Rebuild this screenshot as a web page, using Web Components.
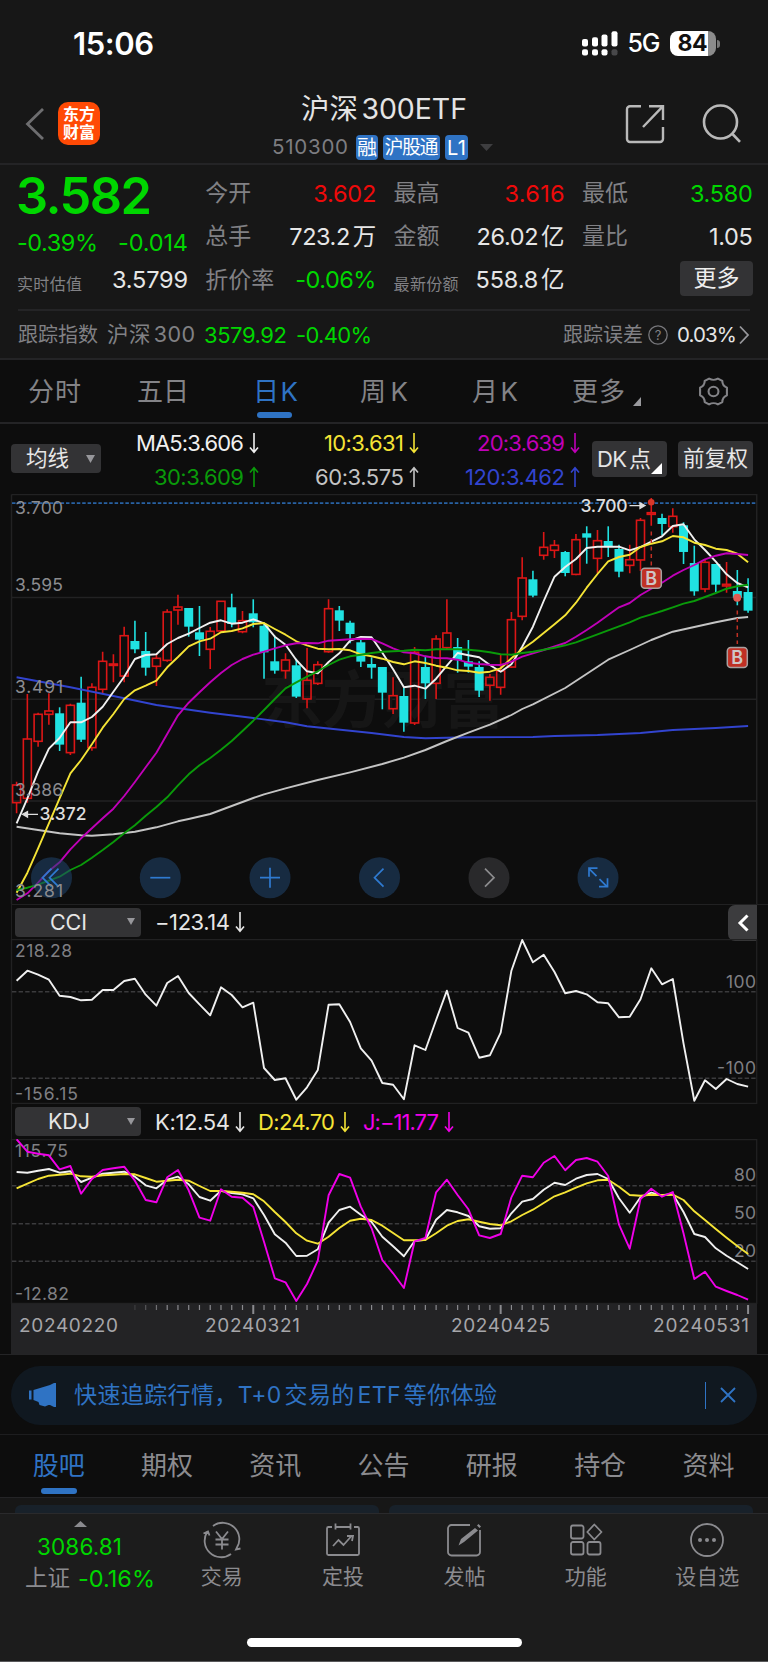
<!DOCTYPE html>
<html lang="zh-CN">
<head>
<meta charset="utf-8">
<title>沪深300ETF 510300</title>
<style>
  html, body { margin: 0; background: #0d0d0d; }
  body {
    width: 768px;
    height: 1662px;
    overflow: hidden;
    color: #e6e6e6;
    font-family: Inter, "Noto Sans CJK SC", sans-serif;
    --up: #ee0a0a;
    --down: #00d600;
    --blue: #2f73c4;
    --dim: #818185;
    --line: #242426;
  }
</style>
</head>
<body>
<stock-page></stock-page>

<script>
'use strict';

// Small base class: every component fills its shadow root from its own render()
class BaseElement extends HTMLElement {
  constructor() {
    super();
    this.attachShadow({ mode: 'open' });
  }
  connectedCallback() {
    this.shadowRoot.innerHTML = this.render();
  }
}

// Text set to an exact width by spreading its letters: <fit-text w="80" size="24">
class FitText extends HTMLElement {
  constructor() {
    super();
    this.attachShadow({ mode: 'open' }).innerHTML = `<style>
      :host { display: block; flex: none; white-space: nowrap; line-height: 1; text-autospace: normal; }
      span { display: inline-block; }
    </style><span><slot></slot></span>`;
  }
  connectedCallback() {
    const span = this.shadowRoot.querySelector('span');
    const w = Number(this.getAttribute('w'));
    if (this.hasAttribute('size')) this.style.fontSize = this.getAttribute('size') + 'px';
    if (this.hasAttribute('color')) this.style.color = this.getAttribute('color');
    if (!w) return;
    const count = this.textContent.length;
    const natural = span.getBoundingClientRect().width;
    this.style.width = w + 'px';
    if (count > 1) span.style.letterSpacing = (w - natural) / (count - 1) + 'px';
  }
}
customElements.define('fit-text', FitText);

class TrendArrow extends BaseElement {
  render() {
    const up = this.getAttribute('dir') === 'up';
    return `<style>
      :host { display: block; flex: none; width: 10px; height: 22px; }
      svg { display: block; ${up ? 'transform: scaleY(-1);' : ''} }
    </style>
    <svg width="10" height="22" fill="none" stroke="currentColor" stroke-width="1.6"><path d="M5 1v19M1 15.500l4 4.800 4-4.800"/></svg>`;
  }
}
customElements.define('trend-arrow', TrendArrow);

class StatusBar extends BaseElement {
  render() {
    return `<style>
      :host { display: flex; align-items: flex-start; height: 90px; padding: 0 48.500px 0 73px; box-sizing: border-box; color: #fff; }
      .time { margin-top: 28px; font-weight: 600; }
      .right { display: flex; margin: 31px 0 0 auto; align-items: center; height: 25px; }
      .net { margin-left: 9px; font-weight: 500; }
      .battery { display: flex; align-items: center; justify-content: center; width: 46px; height: 25px; margin-left: 9px; border-radius: 8px;
        background: linear-gradient(90deg, #fff 38px, #8b8b8b 38px); color: #111; font-weight: 700; }
      .nub { width: 3px; height: 8px; margin-left: 1px; border-radius: 0 3px 3px 0; background: #777; }
    </style>
    <fit-text class="time" w="81" size="31">15:06</fit-text>
    <div class="right">
      <svg width="37" height="25" fill="#fff">
        <rect x="0" y="8" width="6" height="7.5" rx="2"/><rect x="10" y="6.2" width="6" height="9.3" rx="2"/>
        <rect x="19.5" y="3.5" width="6" height="12" rx="2"/><rect x="29.5" y=".3" width="6" height="15.2" rx="2"/>
        <rect x="0" y="18.2" width="6" height="6.4" rx="2"/><rect x="10" y="18.2" width="6" height="6.4" rx="2"/>
        <rect x="19.5" y="18.2" width="6" height="6.4" rx="2"/><rect x="29.5" y="18.2" width="6" height="6.4" rx="2" fill="#48484a"/>
      </svg>
      <fit-text class="net" w="33" size="25">5G</fit-text>
      <div class="battery"><fit-text w="30" size="23">84</fit-text></div>
      <div class="nub"></div>
    </div>`;
  }
}
customElements.define('status-bar', StatusBar);

class NavBar extends BaseElement {
  render() {
    return `<style>
      :host { display: grid; grid-template-columns: 200px 1fr 200px; height: 75px; box-sizing: border-box; border-bottom: 2px solid var(--line); }
      .left, .right { display: flex; align-items: flex-start; }
      .back { margin: 18px 0 0 25px; }
      .logo { display: flex; flex-direction: column; align-items: center; justify-content: center; width: 42px; height: 43px; margin: 12px 0 0 13px;
        border-radius: 10px; background: #ff4a05; color: #fff; font-weight: 700; line-height: 17.500px; font-size: 16px; }
      .mid { display: flex; flex-direction: column; align-items: center; }
      .title { margin-top: 5px; color: #e4e4e4; }
      .sub { display: flex; align-items: center; align-self: flex-start; margin: 11px 0 0 72px; height: 26px; color: #7d7d81; }
      .tag { display: flex; align-items: center; justify-content: center; height: 25px; margin-left: 5px; border-radius: 4px; background: var(--blue); color: #fff; }
      .share { margin: 14px 0 0 57px; }
      .search { margin: 14px 0 0 37px; }
    </style>
    <div class="left">
      <svg class="back" width="20" height="32" fill="none" stroke="#6e6e70" stroke-width="2.8"><path d="M18 1L2.500 16 18 31"/></svg>
      <div class="logo"><div>东方</div><div>财富</div></div>
    </div>
    <div class="mid">
      <fit-text class="title" w="166" size="28.500">沪深300ETF</fit-text>
      <div class="sub">
        <fit-text w="76" size="20.500">510300</fit-text>
        <div class="tag" style="width:22px;margin-left:8px"><fit-text w="20" size="20">融</fit-text></div>
        <div class="tag" style="width:57px"><fit-text w="54" size="19">沪股通</fit-text></div>
        <div class="tag" style="width:23px"><fit-text w="19" size="20">L1</fit-text></div>
        <svg width="13" height="7" style="margin-left:12px"><path d="M0 0h13l-6.500 7z" fill="#3e3e40"/></svg>
      </div>
    </div>
    <div class="right">
      <svg class="share" width="40" height="40" fill="none" stroke="#b9b9b9" stroke-width="2.4"><path d="M16 2.200H5a3 3 0 0 0-3 3V35a3 3 0 0 0 3 3h30a3 3 0 0 0 3-3V23M24 2.200h14V16M38 2.200L18 23"/></svg>
      <svg class="search" width="40" height="40" fill="none" stroke="#b9b9b9" stroke-width="2.6"><circle cx="18.500" cy="18" r="16.500"/><path d="M30 29.500l8 8.300"/></svg>
    </div>`;
  }
}
customElements.define('nav-bar', NavBar);

class QuotePanel extends BaseElement {
  cell(label, labelW, value, valueW, color) {
    const small = label.length === 4;
    return `<div class="cell">
      <fit-text class="${small ? 'small' : 'label'}" w="${labelW}" size="${small ? 16 : 23}">${label}</fit-text>
      <fit-text w="${valueW}" size="23.500" color="${color}">${value}</fit-text>
    </div>`;
  }
  render() {
    const red = 'var(--up)', green = 'var(--down)', plain = '#e6e6e6';
    return `<style>
      :host { display: block; height: 195px; box-sizing: border-box; border-bottom: 2px solid var(--line); }
      .grid { display: grid; grid-template-columns: repeat(4, 171px); column-gap: 17.300px; height: 144px; padding: 7px 15px 0 17px; box-sizing: border-box; }
      .col { display: flex; flex-direction: column; }
      .cell { display: flex; align-items: center; justify-content: space-between; height: 43.300px; }
      .price { display: flex; align-items: center; height: 48px; margin-left: -1px; color: var(--down); font-weight: 600; }
      .label, .small { color: var(--dim); }
      .small { padding-top: 8px; }
      .more { display: flex; align-items: center; justify-content: center; align-self: flex-end; width: 73px; height: 35px; margin-top: 2px; border-radius: 4px; background: #333335; color: #eee; }
      .track { display: flex; align-items: center; height: 48px; margin: 0 18px; border-top: 2px solid var(--line); color: var(--dim); }
      .gap { flex: 1; }
    </style>
    <div class="grid">
      <div class="col">
        <div class="price"><fit-text w="136" size="50.500">3.582</fit-text></div>
        <div class="cell" style="height:45px"><fit-text w="81" size="23.500" color="${green}">-0.39%</fit-text><fit-text w="70" size="23.500" color="${green}">-0.014</fit-text></div>
        <div class="cell" style="height:29px">
          <fit-text class="small" w="65" size="16">实时估值</fit-text><fit-text w="76" size="23.500">3.5799</fit-text>
        </div>
      </div>
      <div class="col">
        ${this.cell('今开', 46, '3.602', 63, red)}
        ${this.cell('总手', 46, '723.2万', 87, plain)}
        ${this.cell('折价率', 69, '-0.06%', 81, green)}
      </div>
      <div class="col">
        ${this.cell('最高', 46, '3.616', 60, red)}
        ${this.cell('金额', 46, '26.02亿', 88, plain)}
        ${this.cell('最新份额', 65, '558.8亿', 89, plain)}
      </div>
      <div class="col">
        ${this.cell('最低', 46, '3.580', 63, green)}
        ${this.cell('量比', 46, '1.05', 44, plain)}
        <div class="more"><fit-text w="46" size="23">更多</fit-text></div>
      </div>
    </div>
    <div class="track">
      <fit-text w="80" size="20">跟踪指数</fit-text>
      <fit-text w="88" size="21.500" style="margin-left:9px">沪深300</fit-text>
      <fit-text w="83" size="22" color="${green}" style="margin-left:9px">3579.92</fit-text>
      <fit-text w="76" size="22" color="${green}" style="margin-left:9px">-0.40%</fit-text>
      <span class="gap"></span>
      <fit-text w="80" size="20">跟踪误差</fit-text>
      <svg width="20" height="20" style="margin-left:5px" fill="none" stroke="#77777b" stroke-width="1.3"><circle cx="10" cy="10" r="9.200"/><text x="10" y="14.600" text-anchor="middle" font-size="13" fill="#818185" stroke="none">?</text></svg>
      <fit-text w="60" size="20.500" color="#e6e6e6" style="margin-left:9px">0.03%</fit-text>
      <svg width="12" height="20" style="margin-left:1px" fill="none" stroke="#97979b" stroke-width="1.800"><path d="M2 1.500l8 8.500-8 8.500"/></svg>
    </div>`;
  }
}
customElements.define('quote-panel', QuotePanel);

class PeriodTabs extends BaseElement {
  render() {
    // label, left edge, width
    const tabs = [['分时', 28, 53], ['五日', 137, 52], ['日K', 253, 45], ['周K', 360, 48], ['月K', 472, 46], ['更多', 572, 53]];
    let x = 0;
    const items = tabs.map(([label, left, w]) => {
      const gap = left - x;
      x = left + w;
      return `<fit-text class="${label === '日K' ? 'on' : ''}" style="margin-left:${gap}px" w="${w}" size="26">${label}</fit-text>`;
    }).join('');
    return `<style>
      :host { display: block; height: 64px; box-sizing: border-box; border-bottom: 2px solid var(--line); color: #838387; }
      .row { display: flex; align-items: center; height: 63px; }
      .on { color: var(--blue); }
      .bar { width: 35px; height: 6px; margin: -11px 0 0 257px; border-radius: 3px; background: var(--blue); }
      .corner { margin: 19px 0 0 8px; }
      .gear { margin-left: 56px; }
    </style>
    <div class="row">${items}
      <svg class="corner" width="8" height="9"><path d="M8 0v9H0z" fill="#9a9a9e"/></svg>
      <svg class="gear" width="33" height="31" viewBox="0 0 30 30" preserveAspectRatio="none" fill="none" stroke="#838387" stroke-width="1.900">
        <path d="M11 2.500q4 2.500 8 0l4 2.300q0 4.500 4.200 6.500v7.400q-4.200 2-4.200 6.500l-4 2.300q-4-2.500-8 0l-4-2.300q0-4.500-4.200-6.500v-7.400q4.200-2 4.200-6.500z" stroke-linejoin="round"/>
        <circle cx="15" cy="15" r="4.500"/>
      </svg>
    </div>
    <div class="bar"></div>`;
  }
}
customElements.define('period-tabs', PeriodTabs);

class MaLegend extends BaseElement {
  item(text, w, color, dir) {
    return `<div class="item" style="color:${color}"><fit-text w="${w}" size="22">${text}</fit-text><trend-arrow dir="${dir}"></trend-arrow></div>`;
  }
  render() {
    return `<style>
      :host { display: flex; align-items: center; height: 70px; }
      .btn { display: flex; align-items: center; box-sizing: border-box; border-radius: 4px; background: #333335; color: #e6e6e6; }
      .ma { width: 90px; height: 29px; margin: 0 0 0 11px; padding-left: 15px; }
      .values { display: grid; grid-template-columns: 158px 160px 161px; grid-auto-rows: 34px; margin-top: 2px; }
      .item { display: flex; align-items: center; justify-content: flex-end; gap: 5px; }
      .act { width: 75px; height: 36px; }
    </style>
    <div class="btn ma"><fit-text w="43" size="21.500">均线</fit-text>
      <svg width="9" height="8" style="margin-left:17px"><path d="M0 0h9L4.500 8z" fill="#97979b"/></svg></div>
    <div class="values">
      ${this.item('MA5:3.606', 108, '#f0f0f0', 'down')}
      ${this.item('10:3.631', 80, '#f5e436', 'down')}
      ${this.item('20:3.639', 88, '#c000b8', 'down')}
      ${this.item('30:3.609', 90, '#0a9a0a', 'up')}
      ${this.item('60:3.575', 89, '#c4c4c4', 'up')}
      ${this.item('120:3.462', 100, '#3244cf', 'up')}
    </div>
    <div class="btn act" style="margin-left:12px;padding-left:5px"><fit-text w="54" size="22">DK点</fit-text>
      <svg width="11" height="11" style="margin:19px 0 0 0"><path d="M11 0v11H0z" fill="#fff"/></svg></div>
    <div class="btn act" style="margin-left:11px;justify-content:center"><fit-text w="65" size="21.500">前复权</fit-text></div>`;
  }
}
customElements.define('ma-legend', MaLegend);

// ---- chart helpers -------------------------------------------------
const STEP = 10.757;   // distance between two trading days
const FIRST = 16.6;    // x of the first day
const dayX = i => FIRST + STEP * i;

// values are thirds of a pixel, measured down from "top"
const linePath = (values, top = 0) => values
  .map((v, i) => Array.isArray(v) ? [dayX(v[0]), v[1]] : [dayX(i), v])
  .map(([x, y], i) => (i ? 'L' : 'M') + x.toFixed(1) + ' ' + (y / 3 + top).toFixed(1))
  .join('');

// u = up (hollow red), d = down (filled cyan); high, body top, body bottom, low
const CANDLES = `u875,885,938,970 u612,747,925,938 u668,673,754,770 u610,663,673,704 d652,670,764,783 u641,646,788,795
d560,638,749,756 u580,592,773,782 u485,514,598,609 u493,522,526,577 u410,437,558,577 d392,453,478,490 d426,483,533,557
u492,505,529,588 u358,366,511,515 u314,351,360,404 d354,354,410,440 d348,427,449,498 u411,424,478,537 u333,334,423,428
d311,352,402,412 u363,392,425,430 d328,370,397,412 d400,407,487,566 d437,514,542,551 u490,510,542,566 d506,526,620,624
u474,571,627,655 u514,524,580,585 u328,356,485,488 d348,361,392,423 d392,398,432,460 d440,457,515,531 d502,522,533,566
d531,531,608,658 u562,617,656,672 d592,618,698,725 u471,487,699,705 d497,531,580,627 u436,447,580,627 u328,429,473,478
d444,471,510,548 d450,514,530,548 d514,531,602,621 u552,562,586,632 u495,543,592,614 u366,389,531,533 u202,264,379,391
d242,268,317,322 u126,172,196,209 u150,166,181,204 d183,186,249,259 u132,149,253,256 d109,130,143,221 u120,152,205,250
d109,153,168,201 d164,177,245,262 u164,209,226,250 u84,91,210,243 u24,68,73,107 d71,84,102,136 u55,79,110,128
d97,106,186,222 d167,219,304,317 u210,217,297,307 d222,222,284,306 u216,283,288,308 d240,303,323,346 d265,306,362,368`
  .split(/\s+/).map(s => [s[0], ...s.slice(1).split(',').map(Number)]);

const MA = {
  '#3244cf': [[0, 562], [5, 592], [10, 625], [13, 645], [18, 668], [22, 684], [25, 697], [27, 709], [33, 729], [36, 741], [38, 745], [42, 742], [48, 741], [50, 738], [54, 735], [58, 729], [61, 720], [65, 714], [68, 708]],
  '#c4c4c4': [[0, 1010], [2, 1020], [4, 1030], [6, 1036], [7, 1037], [9, 1033], [11, 1025], [13, 1012], [15, 994], [16, 987], [18, 972], [20, 948], [22, 924], [23, 913], [25, 895], [28, 870], [31, 847], [34, 822], [36, 803], [38, 780], [40, 753], [42, 728], [44, 704], [46, 675], [47, 657], [48, 643], [51, 594], [55, 509], [57, 480], [59, 450], [61, 425], [63, 411], [65, 397], [67, 384], [68, 381]],
  '#f0f0f0': [1000, 925, 845, 776, 744, 697, 697, 681, 650, 605, 560, 507, 495, 493, 462, 444, 431, 414, 398, 391, 401, 398, 388, 400, 440, 464, 510, 544, 550, 516, 490, 452, 441, 442, 488, 538, 592, 587, 596, 566, 527, 489, 496, 502, 525, 545, 523, 470, 410, 333, 260, 231, 207, 174, 170, 170, 170, 181, 171, 155, 139, 108, 103, 148, 180, 215, 253, 279, 292],
  '#f5e436': [1208, 1148, 1075, 1000, 925, 850, 810, 763, 713, 672, 627, 601, 587, 572, 532, 501, 469, 454, 446, 427, 423, 415, 402, 399, 417, 434, 454, 466, 476, 478, 477, 481, 493, 499, 506, 516, 523, 514, 519, 527, 533, 541, 543, 548, 545, 535, 505, 478, 455, 429, 403, 376, 338, 293, 252, 214, 201, 194, 171, 161, 154, 138, 142, 158, 165, 176, 180, 191, 217],
  '#c000b8': [1230, 1210, 1178, 1143, 1117, 1078, 1045, 1015, 985, 956, 918, 876, 832, 788, 732, 676, 638, 607, 577, 549, 525, 507, 494, 485, 475, 466, 460, 459, 460, 452, 450, 448, 446, 447, 460, 475, 487, 490, 499, 504, 505, 509, 518, 522, 524, 525, 515, 500, 490, 480, 469, 459, 440, 420, 398, 375, 352, 339, 315, 296, 278, 257, 240, 225, 208, 197, 190, 192, 195],
  '#0a9a0a': [1200, 1193, 1184, 1172, 1160, 1140, 1125, 1103, 1080, 1056, 1030, 1006, 977, 951, 922, 886, 853, 826, 804, 779, 753, 723, 692, 660, 627, 595, 577, 560, 544, 525, 509, 499, 494, 489, 485, 484, 482, 479, 481, 478, 478, 478, 479, 482, 487, 493, 494, 489, 485, 479, 473, 466, 457, 445, 433, 421, 409, 397, 383, 373, 363, 352, 341, 333, 321, 309, 296, 289, 284]
};

class CandleChart extends BaseElement {
  candle([kind, high, top, bottom, low], i) {
    const x = dayX(i), y = v => (v / 3 - 4).toFixed(1);
    const h = Math.max((bottom - top) / 3, 1.4);
    if (kind === 'd') {
      return `<path d="M${x} ${y(high)}V${y(low)}" stroke="#20e2e2" stroke-width="1.6"/>
        <rect x="${x - 4.5}" y="${y(top)}" width="9" height="${h}" fill="#20e2e2"/>`;
    }
    return `<path d="M${x} ${y(high)}V${y(top)}M${x} ${y(bottom)}V${y(low)}" stroke="#dc1616" stroke-width="1.6"/>
      <rect x="${x - 4}" y="${y(top)}" width="8" height="${h}" stroke="#dc1616" stroke-width="1.6" fill="none"/>`;
  }
  button(x, icon, color = '#2f7ad0', bg = 'rgba(33,69,109,.55)') {
    return `<g transform="translate(${x} 383.7)" fill="none" stroke="${color}" stroke-width="1.7"><circle r="20.500" fill="${bg}" stroke="none"/><path d="${icon}"/></g>`;
  }
  badge(x, y) {
    return `<rect x="${x + .8}" y="${y + .8}" width="20" height="20" rx="3.500" fill="#c03024" stroke="#a8a0a0" stroke-width="1.500"/>
      <text x="${x + 10.8}" y="${y + 17.2}" text-anchor="middle" font-size="18" font-weight="600" fill="#cfc6c6">B</text>`;
  }
  render() {
    const labels = [['3.700', 19.7], ['3.595', 97], ['3.491', 199.3], ['3.386', 301.7], ['3.281', 403.3]];
    return `<style>
      :host { display: block; height: 410px; }
      svg { display: block; }
      text { font-family: inherit; }
    </style>
    <svg width="768" height="410">
      <g fill="none" stroke="#222223" stroke-width="1.5">
        <path d="M11.500 .6H756.700V411M11.500 .6V411M11.500 103.500H756.700M11.500 205.300H756.700M11.500 307H756.700"/>
      </g>
      <text x="261" y="229" font-size="62" font-weight="700" fill="#161616" textLength="244">东方财富</text>
      <path d="M12 9.200H757" stroke="#2862a4" stroke-width="1.800" stroke-dasharray="3.500 1.900"/>
      ${CANDLES.map((c, i) => this.candle(c, i)).join('')}
      <g fill="none" stroke-width="1.900" stroke-linejoin="round">
        ${Object.keys(MA).map(color => `<path d="${linePath(MA[color], -4)}" stroke="${color}"/>`).join('')}
      </g>
      <g stroke="#c03024" stroke-width="1.500" stroke-dasharray="4 3.500"><path d="M651.300 37.500V73M737.300 116.500V150"/></g>
      <circle cx="651.200" cy="8.200" r="3.300" fill="#d8382a"/><circle cx="737.200" cy="103.700" r="4" fill="#e05a50"/>
      ${this.badge(640.5, 73.5)}${this.badge(726.5, 152.7)}
      <g font-size="17.500" font-weight="500" fill="#dedede">
        <text x="39.500" y="326.300" textLength="47">3.372</text><text x="580.500" y="18" textLength="47">3.700</text>
      </g>
      <g fill="#dedede" stroke="#dedede" stroke-width="1.300">
        <path d="M27 320.300H38M22.500 320.300l5-2.800v5.600z"/><path d="M629.500 11.600H641M645 11.600l-5-2.800v5.600z"/>
      </g>
      ${this.button(51.5, 'M0-9l-9 9 9 9M7-9l-9 9 9 9')}
      ${this.button(160.3, 'M-10 0h20')}
      ${this.button(270, 'M-10 0h20M0-10v20')}
      ${this.button(379.5, 'M4-9l-9 9 9 9')}
      ${this.button(489, 'M-4-9l9 9-9 9', '#8c8c8e', '#29292b')}
      ${this.button(598, 'M-9-1v-8.500h8.500M-9-9l7.500 7.500M9.500 .5V9H1M9 9L1.500 1.500')}
      <g font-size="17.500" fill="#8c8c90">
        ${labels.map(([t, y]) => `<text x="15" y="${y}" textLength="48">${t}</text>`).join('')}
      </g>
    </svg>`;
  }
}
customElements.define('candle-chart', CandleChart);

const SERIES = {
  cci: {
    '#f0f0f0': [242, 212, 224, 239, 287, 291, 301, 299, 270, 270, 243, 236, 284, 317, 249, 228, 279, 313, 346, 262, 285, 322, 308, 504, 540, 535, 599, 562, 510, 314, 313, 366, 445, 482, 549, 554, 598, 436, 450, 360, 272, 384, 398, 473, 466, 398, 212, 120, 187, 164, 216, 280, 273, 283, 307, 310, 352, 350, 298, 205, 253, 237, 430, 602, 541, 567, 537, 552, 560].map(v => v - 117)
  },
  kdj: {
    '#f0f0f0': [126, 128, 122, 117, 128, 124, 156, 143, 131, 128, 125, 140, 166, 175, 149, 140, 163, 201, 212, 182, 189, 193, 205, 255, 313, 338, 378, 377, 358, 278, 240, 230, 254, 276, 320, 349, 379, 333, 329, 269, 240, 247, 258, 289, 296, 295, 250, 215, 207, 179, 158, 165, 146, 135, 132, 147, 205, 248, 202, 188, 196, 192, 246, 312, 321, 355, 377, 397, 417].map(v => v - 27),
    '#f5e436': [175, 161, 147, 137, 134, 131, 139, 140, 136, 134, 132, 133, 144, 155, 152, 149, 152, 168, 183, 183, 185, 188, 193, 214, 246, 276, 310, 332, 341, 320, 294, 272, 266, 270, 287, 309, 331, 331, 330, 310, 287, 273, 268, 275, 282, 286, 274, 255, 239, 219, 199, 187, 173, 160, 151, 149, 170, 195, 197, 194, 195, 194, 210, 244, 270, 297, 323, 348, 372].map(v => v - 27),
    '#f000e8': [28, 65, 71, 76, 118, 108, 191, 147, 120, 115, 110, 152, 210, 217, 142, 120, 181, 263, 272, 178, 200, 203, 231, 335, 445, 457, 513, 462, 392, 196, 132, 143, 230, 295, 390, 430, 474, 334, 324, 187, 149, 195, 238, 316, 324, 312, 202, 137, 142, 98, 78, 121, 90, 84, 95, 138, 284, 356, 207, 176, 200, 186, 310, 447, 425, 470, 483, 495, 509].map(v => v - 27)
  }
};

// Indicator block: a header (its readings come in by the slot) and a small line chart
class IndicatorPanel extends BaseElement {
  render() {
    const kind = this.getAttribute('kind');
    const cci = kind === 'cci';
    const levels = cci ? [[52.7, 48.7, '100', 30], [139.3, 135.3, '-100', 39]] : [[46.7, 42.3, '80', 22], [84.7, 80, '50', 22], [122.3, 117.7, '20', 22]];
    const [max, min] = cci ? [['218.28', 57], ['-156.15', 63]] : [['115.75', 53], ['-12.82', 54]];
    return `<style>
      :host { display: block; height: 200px; }
      header { display: flex; align-items: center; height: 35px; box-sizing: border-box; padding: 1px 11px 0 0; margin-left: 11px; border-left: 1px solid #1f1f20; ${cci ? 'border-top: 1px solid #212122;' : ''} }
      .name { display: flex; align-items: center; width: 126px; height: 29px; box-sizing: border-box; margin-left: 3px; padding-left: ${cci ? 35 : 33}px; border-radius: 4px; background: #333335; }
      .caret { margin: -1px 6px 0 auto; }
      .back { display: flex; align-items: center; justify-content: center; align-self: stretch; width: 29px; height: 36px; margin: -1px 0 0 auto; border-radius: 7px 0 0 7px; background: #3c3c3e; }
      svg { display: block; }
      .chart { display: block; }
      text { font-family: inherit; }
    </style>
    <header>
      <div class="name"><fit-text w="${cci ? 37 : 42}" size="21.500">${kind.toUpperCase()}</fit-text>
        <svg class="caret" width="8" height="7"><path d="M0 0h8L4 7z" fill="#97979b"/></svg></div>
      <slot></slot>
      ${cci ? '<div class="back"><svg width="12" height="18" fill="none" stroke="#fff" stroke-width="3"><path d="M10.500 1.500L3 9l7.500 7.500"/></svg></div>' : ''}
    </header>
    <svg class="chart" width="768" height="165">
      <rect x="11.500" y=".6" width="745.200" height="163.800" fill="none" stroke="#212122" stroke-width="1.300"/>
      ${levels.map(l => `<path d="M12 ${l[0]}H756" stroke="#3b3b3d" stroke-width="1.5" stroke-dasharray="4.4 2.2"/>`).join('')}
      <g font-size="17.500" fill="#7f7f83">
        <text x="15" y="18.300" textLength="${max[1]}">${max[0]}</text>
        <text x="15" y="160.700" textLength="${min[1]}">${min[0]}</text>
        ${levels.map(l => `<text x="${756 - l[3]}" y="${l[1]}" textLength="${l[3]}">${l[2]}</text>`).join('')}
      </g>
      <g fill="none" stroke-width="1.900" stroke-linejoin="round">
        ${Object.entries(SERIES[kind]).map(([color, v]) => `<path d="${linePath(v)}" stroke="${color}"/>`).join('')}
      </g>
    </svg>`;
  }
}
customElements.define('indicator-panel', IndicatorPanel);

class DateAxis extends BaseElement {
  render() {
    let ticks = '';
    for (let i = 11; i <= 68; i++) {
      const major = i === 22 || i === 45 || i === 68;
      ticks += `<path d="M${dayX(i)} 1v${major ? 9 : 5}" stroke-width="${major ? 2 : 1.2}" opacity="${Math.min(1, (i - 10) / 4)}"/>`;
    }
    return `<style>
      :host { display: block; height: 51px; background: linear-gradient(#232325, #232325) 11px 0 / 746px 50px no-repeat; border-bottom: 1px solid var(--line); box-sizing: border-box; }
      svg { display: block; height: 12px; }
      .row { display: flex; padding-left: 19px; color: #a6a6aa; }
    </style>
    <svg width="768" height="12" stroke="#8a8a8e">${ticks}</svg>
    <div class="row">
      <fit-text w="99" size="19">20240220</fit-text>
      <fit-text w="95" size="19" style="margin-left:87px">20240321</fit-text>
      <fit-text w="99" size="19" style="margin-left:151px">20240425</fit-text>
      <fit-text w="96" size="19" style="margin-left:103px">20240531</fit-text>
    </div>`;
  }
}
customElements.define('date-axis', DateAxis);

class PromoBanner extends BaseElement {
  render() {
    return `<style>
      :host { display: block; height: 81px; padding: 11px 11px 0; box-sizing: border-box; border-bottom: 1px solid #1d1d1f; color: var(--blue); }
      .pill { display: flex; align-items: center; height: 59px; padding: 0 21px 0 17px; border-radius: 30px; background: #101820; }
      .text { margin-left: 17px; }
      .sep { width: 1px; height: 27px; margin: 0 14px 0 auto; background: var(--blue); }
    </style>
    <div class="pill">
      <svg width="29" height="26" fill="#2f73c4"><path d="M1 8.500h2.500v9H1zM5.500 8L22 3l4-2h2v24h-2l-4-2-1.500 0-3.500 1.500-5.500-1.500-1-3L5.500 18z"/></svg>
      <fit-text class="text" w="423" size="23">快速追踪行情，T+0交易的ETF等你体验</fit-text>
      <span class="sep"></span>
      <svg width="16" height="16" fill="none" stroke="#2f73c4" stroke-width="1.800"><path d="M1 1l14 14M15 1L1 15"/></svg>
    </div>`;
  }
}
customElements.define('promo-banner', PromoBanner);

class SectionTabs extends BaseElement {
  render() {
    const tabs = ['股吧', '期权', '资讯', '公告', '研报', '持仓', '资料'];
    return `<style>
      :host { display: block; height: 78px; }
      nav { display: grid; grid-template-columns: repeat(7, 108.300px); height: 63px; padding-left: 4.500px; box-sizing: border-box; border-bottom: 1px solid var(--line); color: #8b8b8f; }
      .tab { display: flex; flex-direction: column; align-items: center; padding-top: 18px; }
      .tab.on { color: var(--blue); }
      .tab.on::after { content: ""; width: 36px; height: 6px; margin-top: 8.500px; border-radius: 3px; background: var(--blue); }
      .cards { display: grid; grid-template-columns: 364px 364px; gap: 10px; height: 15px; padding: 7px 15px 0; box-sizing: border-box; background: #171717; overflow: hidden; }
      .cards div { height: 20px; border-radius: 6px; background: #18212a; }
    </style>
    <nav>${tabs.map((t, i) => `<div class="tab ${i ? '' : 'on'}"><fit-text w="52" size="26">${t}</fit-text></div>`).join('')}</nav>
    <div class="cards"><div></div><div></div></div>`;
  }
}
customElements.define('section-tabs', SectionTabs);

class BottomBar extends BaseElement {
  item(label, w, icon) {
    return `<div class="item"><svg width="44" height="38" viewBox="-22 -19 44 38" fill="none" stroke="#8b8b8f" stroke-width="1.8">${icon}</svg>
      <fit-text w="${w}" size="21">${label}</fit-text></div>`;
  }
  render() {
    return `<style>
      :host { display: block; height: 149px; box-sizing: border-box; border-top: 1px solid #2a2a2c; border-bottom: 1px solid #58585a; background: #1c1c1c; color: #8b8b8f; }
      .row { display: flex; height: 124px; }
      .index { display: flex; flex-direction: column; width: 161px; }
      .tri { margin: 7px 0 0 74px; }
      .num { margin: 8.500px 0 0 37px; }
      .pct { display: flex; align-items: center; margin: 8.500px 0 0 25px; }
      .item { display: flex; flex-direction: column; align-items: center; width: 121.400px; padding-top: 7px; }
      .item fit-text { margin-top: 7px; }
      .home { width: 275px; height: 9px; margin: 0 auto; border-radius: 5px; background: #fff; }
    </style>
    <div class="row">
      <div class="index">
        <svg class="tri" width="13" height="6"><path d="M6.500 0L13 6H0z" fill="#8b8b8f"/></svg>
        <fit-text class="num" w="85" size="22.500" color="var(--down)">3086.81</fit-text>
        <div class="pct"><fit-text w="45" size="22.500">上证</fit-text><fit-text style="margin-left:8px" w="77" size="23.500" color="var(--down)">-0.16%</fit-text></div>
      </div>
      ${this.item('交易', 42, `<path d="M-9-14A16.500 16.500 0 0 1 14.500 8.500M16 5l-2 4.500 4.500-1M9 14A16.500 16.500 0 0 1-14.500-8.500M-18.500-6.500l4.500-2 1.500 4M-6-8.500L0-1 6-8.500M0-1V9.500M-6.500-.5h13M-6.500 4.500h13"/>`)}
      ${this.item('定投', 42, `<path d="M-11-13h-3.500a1.500 1.500 0 0 0-1.500 1.500V13.500A1.500 1.500 0 0 0-14.500 15h29A1.500 1.500 0 0 0 16 13.500V-11.500A1.500 1.500 0 0 0 14.500-13H11M-7.500-13H7.500M-7.500-16.500v6M7.500-16.500v6M-10 6l5.500-6 5 5 8-9M4-4h6l-1 5"/>`)}
      ${this.item('发帖', 42, `<path d="M6-15h-18.500A3.500 3.500 0 0 0-16-11.500V12A3.500 3.500 0 0 0-12.500 15.500h25A3.500 3.500 0 0 0 16 12V-10"/><path d="M11-12l3 2.500L0 2l-5.500 3.500L-3-1zM13-14.500l1.500-1.500 2.500 2.500-1.500 1.500z" fill="#8b8b8f" stroke="none"/>`)}
      ${this.item('功能', 42, `<rect x="-15" y="-14.500" width="12.500" height="13" rx="2"/><rect x="-15" y="2" width="12.500" height="12.500" rx="2"/><rect x="1.500" y="2" width="13" height="12.500" rx="2"/><path d="M8.300-15.500l7.200 7.500-7.200 7.500L1.300-8z" stroke-linejoin="round"/>`)}
      ${this.item('设自选', 64, `<circle r="16"/><g fill="#8b8b8f" stroke="none"><circle cx="-7" r="2"/><circle r="2"/><circle cx="7" r="2"/></g>`)}
    </div>
    <div class="home"></div>`;
  }
}
customElements.define('bottom-bar', BottomBar);

class StockPage extends BaseElement {
  render() {
    return `<style>
      :host { display: flex; flex-direction: column; width: 768px; height: 1662px; }
      .top { background: #171717; }
      fit-text.first { margin-left: 14px; }
      trend-arrow { margin-left: 5px; }
    </style>
    <div class="top">
      <status-bar></status-bar>
      <nav-bar></nav-bar>
      <quote-panel></quote-panel>
    </div>
    <period-tabs></period-tabs>
    <ma-legend></ma-legend>
    <candle-chart></candle-chart>
    <indicator-panel kind="cci">
      <fit-text class="first" w="75" size="22">−123.14</fit-text><trend-arrow></trend-arrow>
    </indicator-panel>
    <indicator-panel kind="kdj">
      <fit-text class="first" w="75" size="22">K:12.54</fit-text><trend-arrow></trend-arrow>
      <fit-text w="77" size="22" color="#f5e436" style="margin-left:13px">D:24.70</fit-text><trend-arrow style="color:#f5e436"></trend-arrow>
      <fit-text w="76" size="22" color="#f000e8" style="margin-left:13px">J:−11.77</fit-text><trend-arrow style="color:#f000e8"></trend-arrow>
    </indicator-panel>
    <date-axis></date-axis>
    <promo-banner></promo-banner>
    <section-tabs></section-tabs>
    <bottom-bar></bottom-bar>`;
  }
}
customElements.define('stock-page', StockPage);
</script>
</body>
</html>
